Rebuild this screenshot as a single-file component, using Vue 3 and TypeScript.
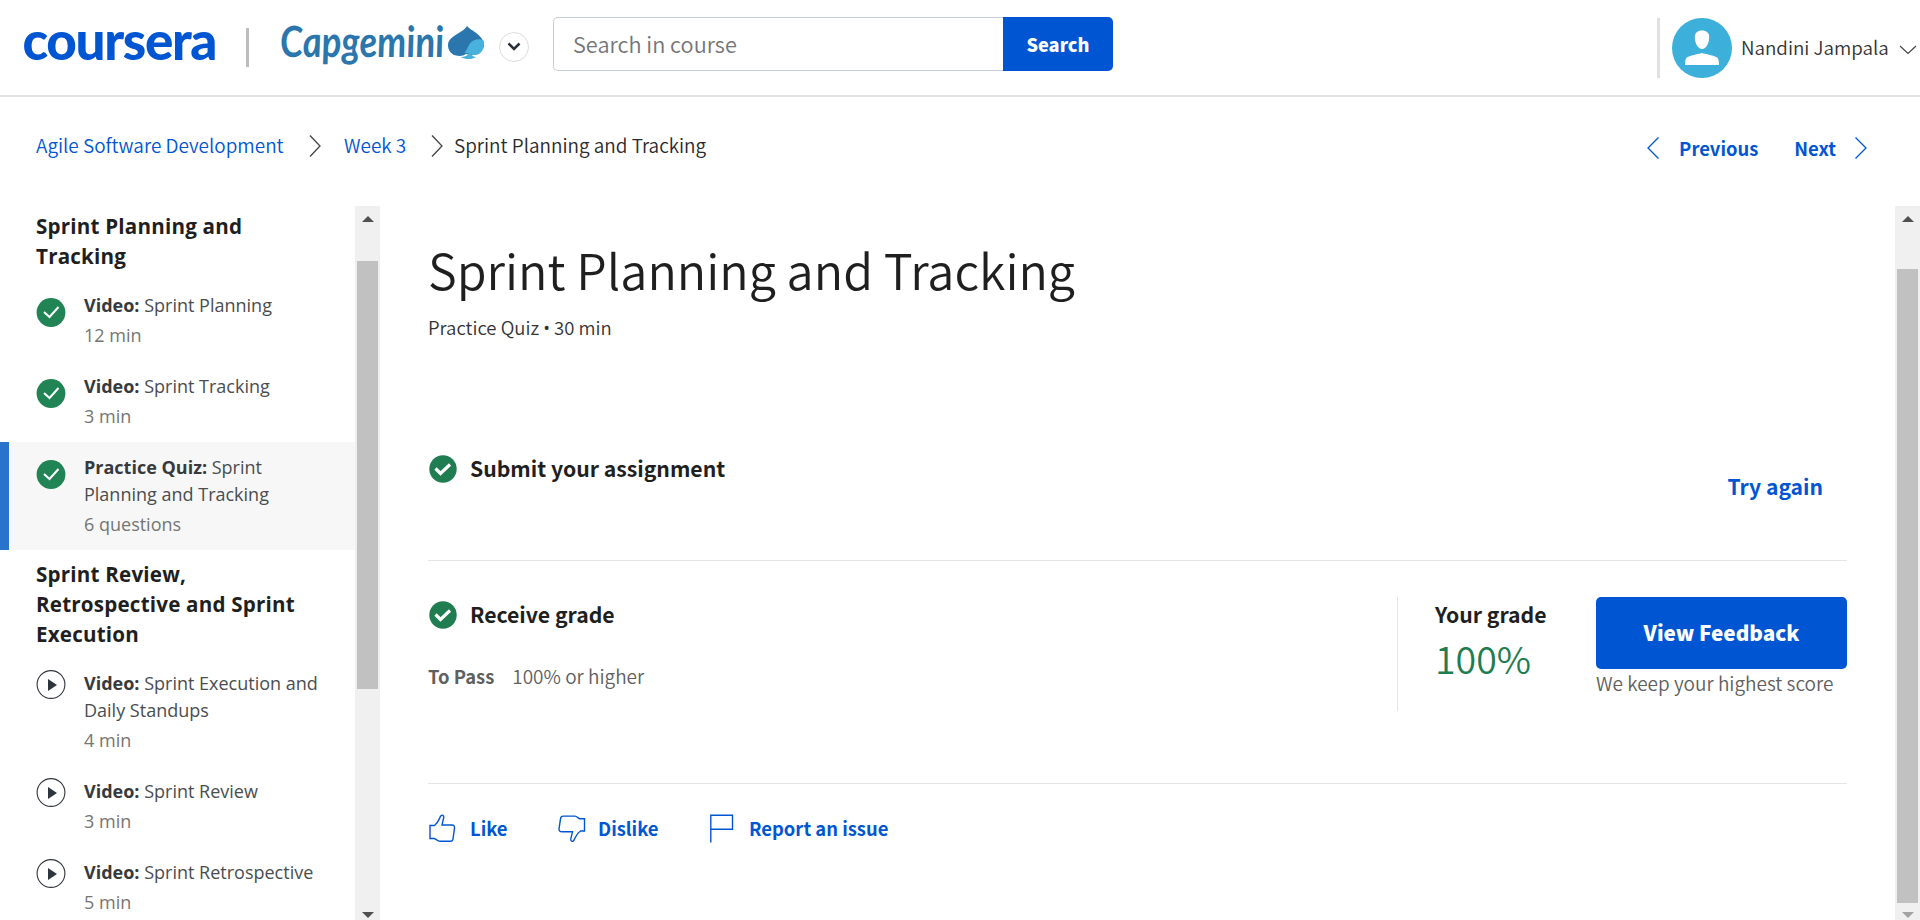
<script setup lang="ts">
interface Lesson {
  kind: string
  name: string
  meta: string
  done: boolean
  active?: boolean
}
interface Section {
  title: string
  lessons: Lesson[]
}

const sections: Section[] = [
  {
    title: 'Sprint Planning and Tracking',
    lessons: [
      { kind: 'Video:', name: 'Sprint Planning', meta: '12 min', done: true },
      { kind: 'Video:', name: 'Sprint Tracking', meta: '3 min', done: true },
      { kind: 'Practice Quiz:', name: 'Sprint Planning and Tracking', meta: '6 questions', done: true, active: true },
    ],
  },
  {
    title: 'Sprint Review, Retrospective and Sprint Execution',
    lessons: [
      { kind: 'Video:', name: 'Sprint Execution and Daily Standups', meta: '4 min', done: false },
      { kind: 'Video:', name: 'Sprint Review', meta: '3 min', done: false },
      { kind: 'Video:', name: 'Sprint Retrospective', meta: '5 min', done: false },
    ],
  },
]
</script>

<template>
  <div class="page">
    <header class="header">
      <svg class="coursera" width="196" height="64" viewBox="0 0 196 64" role="img">
        <text x="0.5" y="50" textLength="195">coursera</text>
      </svg>
      <span class="brand-divider"></span>
      <svg class="capgemini" width="206" height="72" viewBox="0 0 206 72">
        <text transform="translate(0 47) skewX(4)" x="1" y="0" textLength="164" lengthAdjust="spacingAndGlyphs">Capgemini</text>
        <g transform="translate(0 8)">
          <path fill="#2a76ad" d="M187 8c3 3.500 9 6 12.500 10 3 3 4.500 6 4.500 9 0 6-6 9-13 10l-5-1c-3 2.500-9 2.500-13 .5-3-2-5-5-5-9 0-10 14-11.500 19-19.500z" />
          <path fill="#48b1dc" d="M204 23c.7 8-3 13.500-8 14-2 0-3.700-.5-5-1.500.8 2 2.500 3.300 5 3.500-4 2.700-11 2.700-15 0 4-.2 7-1.500 8-4-3 .5-3.500 0-4.500-.8 2.500-1.700 3-4.700 5-8.200 3-4.500 10-6.500 14.500-3z" />
        </g>
      </svg>
      <button class="brand-toggle" aria-label="Switch program">
        <svg width="14" height="10" viewBox="0 0 14 10"><path d="M1.500 1.500L7 7l5.500-5.500" fill="none" stroke="#2b3137" stroke-width="2.500" /></svg>
      </button>
      <div class="search">
        <div class="search-field">Search in course</div>
        <button class="search-button">Search</button>
      </div>
      <div class="user">
        <svg class="avatar" width="60" height="60" viewBox="0 0 60 60">
          <circle cx="30" cy="30" r="30" fill="#3cafdb" />
          <path d="M30 12.500c4.500 0 7.200 2.500 7.200 6.500 0 6-3 12-7.200 12s-7.200-6-7.200-12c0-4 2.700-6.500 7.200-6.500z" fill="#fff" />
          <path d="M13 47c0-3 .3-6 1.500-7.200C17 37.500 27 36 30 35c3 1 13 2.500 15.500 4.800C46.700 41 47 44 47 47z" fill="#fff" />
        </svg>
        <span class="user-name">Nandini Jampala</span>
        <svg class="caret" width="18" height="10" viewBox="0 0 18 10"><path d="M1 1l8 7.500L17 1" fill="none" stroke="#444" stroke-width="1.200" /></svg>
      </div>
    </header>

    <nav class="crumbs">
      <a class="course">Agile Software Development</a>
      <svg class="sep first" width="12" height="22" viewBox="0 0 12 22"><path d="M1 .5L11 11 1 21.500" /></svg>
      <a class="week">Week 3</a>
      <svg class="sep second" width="12" height="22" viewBox="0 0 12 22"><path d="M1 .5L11 11 1 21.500" /></svg>
      <span class="here">Sprint Planning and Tracking</span>
      <div class="pager">
        <svg width="12" height="22" viewBox="0 0 12 22"><path d="M11.500 .5L1 11l10.500 10.500" /></svg>
        <a class="previous">Previous</a>
        <a class="next">Next</a>
        <svg width="12" height="22" viewBox="0 0 12 22"><path d="M.5 .5L11 11 .5 21.500" /></svg>
      </div>
    </nav>

    <div class="body">
      <aside class="sidebar">
        <div class="outline">
          <section v-for="section in sections" :key="section.title">
            <h3>{{ section.title }}</h3>
            <div v-for="lesson in section.lessons" :key="lesson.name" class="lesson" :class="{ active: lesson.active }">
              <svg v-if="lesson.done" class="state" width="30" height="29" viewBox="-.5 0 30 29">
                <circle cx="14.500" cy="14.500" r="14.400" fill="#208454" />
                <path d="M7.500 14l5.500 5L22 9" fill="none" stroke="#fff" stroke-width="2" />
              </svg>
              <svg v-else class="state pending" width="30" height="29" viewBox="-.5 0 30 29">
                <circle cx="14.500" cy="14.500" r="13.900" fill="none" stroke="#2f353c" stroke-width="1.100" />
                <path d="M11.500 9v12l9-6z" fill="#2f353c" />
              </svg>
              <div class="lesson-text">
                <div class="lesson-name"><b>{{ lesson.kind }}</b> {{ lesson.name }}</div>
                <div class="lesson-meta">{{ lesson.meta }}</div>
              </div>
            </div>
          </section>
        </div>
        <div class="scrollbar">
          <i class="arrow up"></i>
          <i class="thumb short"></i>
          <i class="arrow down"></i>
        </div>
      </aside>

      <main class="content">
        <h1>Sprint Planning and Tracking</h1>
        <p class="subtitle">Practice Quiz <span class="dot">•</span> 30 min</p>

        <section class="step submit">
          <div class="step-title">
            <svg width="28" height="28" viewBox="0 0 28 28">
              <circle cx="14" cy="14" r="13.700" fill="#1f7d51" />
              <path d="M6.500 13.500l5 5L21 9.500" fill="none" stroke="#fff" stroke-width="3.200" />
            </svg>
            <h2>Submit your assignment</h2>
          </div>
          <a class="try-again">Try again</a>
        </section>

        <section class="step grade">
          <div class="grade-info">
            <div class="step-title">
              <svg width="28" height="28" viewBox="0 0 28 28">
                <circle cx="14" cy="14" r="13.700" fill="#1f7d51" />
                <path d="M6.500 13.500l5 5L21 9.500" fill="none" stroke="#fff" stroke-width="3.200" />
              </svg>
              <h2>Receive grade</h2>
            </div>
            <p class="to-pass"><b>To Pass</b><span>100% or higher</span></p>
          </div>
          <div class="score">
            <h2>Your grade</h2>
            <strong>100%</strong>
          </div>
          <div class="feedback">
            <button class="view-feedback">View Feedback</button>
            <span>We keep your highest score</span>
          </div>
        </section>

        <footer class="actions">
          <a class="like">
            <svg width="28" height="29" viewBox="0 0 28 29"><path d="M2 11.500h4.500c4.500-3 4.500-7.500 6.500-9.800 1-1.200 3.200-.4 2.700 2L14 11h10c1.800 0 2.800 1.200 2.500 3l-1.500 11c-.2 1.500-1 2.300-2.500 2.300H12c-2.500 0-4.500-2.800-6-2.800H2z" /></svg>
            <span>Like</span>
          </a>
          <a class="dislike">
            <svg width="28" height="29" viewBox="0 0 28 29"><path d="M26.500 4.800V17h-4c-5 3-5 7.500-7 9.800-1 1.200-3.200.4-2.700-2l1.700-7h-10.500c-2 0-3.200-1-3-3l1.500-10c.3-2 1-2.700 2.800-2.700H17c2 0 3.500 2.700 5 2.700z" /></svg>
            <span>Dislike</span>
          </a>
          <a class="report">
            <svg width="26" height="29" viewBox="0 0 26 29"><path d="M1.800 28.500V1.200h21.700v14H1.800" /></svg>
            <span>Report an issue</span>
          </a>
        </footer>
      </main>

      <div class="scrollbar">
        <i class="arrow up"></i>
        <i class="thumb tall"></i>
        <i class="arrow down faded"></i>
      </div>
    </div>
  </div>
</template>

<style>
body {
  margin: 0;
  background: #fff;
}
</style>

<style scoped>
.page {
  box-sizing: border-box;
  width: 1920px;
  height: 920px;
  overflow: hidden;
  display: flex;
  flex-direction: column;
  background: #fff;
  color: #1f1f1f;
  font-family: "Noto Sans CJK SC", "Open Sans", sans-serif;
}
h1, h2, h3, p {
  margin: 0;
}
button {
  border: 0;
  padding: 0;
  font-family: inherit;
  color: #fff;
  background: #0056d2;
}
svg {
  flex: none;
  display: block;
}
h1, .subtitle, .search-field, .user-name, .course, .week, .here, .to-pass span, .feedback span, .score strong {
  font-family: "Noto Sans CJK SC DemiLight", "Noto Sans CJK SC", sans-serif;
  font-weight: 350;
  white-space: nowrap;
}

/* header */
.header {
  box-sizing: border-box;
  height: 97px;
  flex: none;
  display: flex;
  align-items: flex-start;
  border-bottom: 2px solid #e1e1e1;
}
.coursera {
  margin: 10px 0 0 22px;
  overflow: visible;
  font: 900 53px Lato, sans-serif;
  fill: #0056d2;
}
.brand-divider {
  width: 3px;
  height: 39px;
  margin: 28px 0 0 28px;
  background: #bdbdbd;
}
.capgemini {
  margin: 10px 0 0 31px;
  overflow: visible;
  font: italic 700 43px Lato, sans-serif;
  fill: #2a76ad;
}
.brand-toggle {
  box-sizing: border-box;
  width: 30px;
  height: 30px;
  margin: 32px 0 0 13px;
  display: flex;
  align-items: center;
  justify-content: center;
  border: 1px solid #dcdcdc;
  border-radius: 50%;
  background: #fff;
}
.search {
  display: flex;
  margin: 17px 0 0 24px;
}
.search-field {
  box-sizing: border-box;
  width: 450px;
  height: 54px;
  padding-left: 19px;
  border: 1px solid #c7cdd6;
  border-right: 0;
  border-radius: 5px 0 0 5px;
  font-size: 21.7px;
  line-height: 52px;
  color: #757575;
}
.search-button {
  width: 110px;
  height: 54px;
  padding-bottom: 1px;
  border-radius: 0 5px 5px 0;
  font-size: 18.2px;
  font-weight: 900;
}
.user {
  box-sizing: border-box;
  display: flex;
  align-items: center;
  width: 260px;
  height: 60px;
  margin: 18px 3px 0 auto;
  border-left: 3px solid #e0e0e0;
}
.avatar {
  margin: 0 9px 0 12px;
}
.user-name {
  padding-bottom: 3px;
  font-size: 18.8px;
  color: #333;
}
.caret {
  margin: 3px 0 0 auto;
}

/* breadcrumbs */
.crumbs {
  height: 109px;
  flex: none;
  display: flex;
  align-items: flex-start;
  padding-left: 36px;
  font-size: 18.95px;
  line-height: 28px;
}
.crumbs > a, .here {
  margin-top: 34px;
}
.crumbs a {
  color: #0056d2;
}
.course {
  width: 248px;
}
.week {
  width: 62px;
}
.here {
  color: #2b2b2b;
}
.sep {
  margin-top: 38px;
  fill: none;
  stroke: #444;
  stroke-width: 1.3;
}
.sep.first {
  margin-left: 25px;
  margin-right: 23px;
}
.sep.second {
  margin-left: 25px;
  margin-right: 11px;
}
.pager {
  display: flex;
  align-items: center;
  margin: 37px 53px 0 auto;
  height: 28px;
  font-size: 18.4px;
  font-weight: 700;
}
.pager svg {
  fill: none;
  stroke: #0056d2;
  stroke-width: 1.3;
}
.previous {
  margin: 0 36px 0 20px;
}
.next {
  margin-right: 19px;
}

/* body */
.body {
  flex: 1;
  min-height: 0;
  display: flex;
}
.sidebar {
  width: 380px;
  flex: none;
  display: flex;
  font-family: "Open Sans", sans-serif;
}
.outline {
  width: 355px;
  height: 714px;
  overflow: hidden;
  display: flex;
  flex-direction: column;
}
.outline section:first-child {
  margin-top: -4px;
}
.outline section {
  flex: none;
}
h3 {
  padding: 9px 50px 9px 36px;
  font-size: 20.6px;
  font-weight: 700;
  line-height: 30px;
  letter-spacing: 0.2px;
}
.lesson {
  box-sizing: border-box;
  display: flex;
  padding: 12px 20px 12px 27px;
  border-left: 9px solid transparent;
}
.lesson.active {
  border-left-color: #2a73cc;
  background: #f7f7f7;
}
.state {
  margin: 6px 18px 0 0;
}
.state.pending {
  margin-top: 0;
}
.lesson-text {
  width: 240px;
}
.lesson-name {
  font-size: 18px;
  line-height: 27px;
  color: #4a4d50;
}
.lesson-name b {
  font-weight: 700;
  color: #373a3c;
}
.lesson-meta {
  font-size: 18px;
  line-height: 30px;
  padding-top: 1px;
  margin-bottom: -1px;
  color: #757575;
}
.scrollbar {
  width: 25px;
  flex: none;
  display: flex;
  flex-direction: column;
  align-items: center;
  background: #f0f0f0;
}
.thumb {
  width: 21px;
  background: #c1c1c1;
}
.thumb.short {
  height: 428px;
  margin-top: 39px;
}
.thumb.tall {
  height: 634px;
  margin-top: 47px;
}
.arrow {
  border-left: 6px solid transparent;
  border-right: 6px solid transparent;
}
.arrow.up {
  margin-top: 10px;
  border-bottom: 6px solid #505050;
}
.arrow.down {
  margin-top: auto;
  margin-bottom: 2px;
  border-top: 6px solid #505050;
}
.arrow.faded {
  border-top-color: #a3a3a3;
}

/* main column */
.content {
  flex: 1;
  padding: 33px 48px 0 48px;
}
h1 {
  font-size: 48.6px;
  line-height: 60px;
}
.subtitle {
  margin-top: 14px;
  font-size: 18.5px;
  line-height: 28px;
  color: #333;
}
.dot {
  font: 18px/20px "Open Sans", sans-serif;
}
.submit {
  box-sizing: border-box;
  height: 220px;
  padding-top: 114px;
  display: flex;
  align-items: flex-start;
  justify-content: space-between;
  border-bottom: 1px solid #e5e5e5;
}
.step-title {
  display: flex;
  align-items: center;
  gap: 13px;
  height: 28px;
  padding-left: 1px;
}
h2 {
  font-size: 21.2px;
  font-weight: 700;
  line-height: 28px;
}
.step-title h2 {
  padding-bottom: 2px;
}
.try-again {
  margin: 17px 24px 0 0;
  font-size: 21.1px;
  font-weight: 700;
  line-height: 28px;
  color: #0056d2;
}
.grade {
  box-sizing: border-box;
  height: 223px;
  padding-top: 36px;
  display: flex;
  align-items: flex-start;
  border-bottom: 1px solid #e5e5e5;
}
.grade-info {
  flex: 1;
  padding-top: 4px;
}
.to-pass {
  display: flex;
  gap: 18px;
  margin-top: 33px;
  font-size: 19px;
  line-height: 28px;
  color: #5f5f5f;
}
.to-pass b {
  font-size: 18.4px;
}
.score {
  box-sizing: border-box;
  width: 199px;
  height: 114px;
  padding: 3px 0 0 37px;
  border-left: 1px solid #e5e5e5;
}
.score strong {
  display: block;
  margin-top: 5px;
  font-size: 37.5px;
  line-height: 50px;
  color: #1f7d51;
}
.feedback {
  width: 251px;
}
.view-feedback {
  display: block;
  width: 251px;
  height: 72px;
  padding-bottom: 2px;
  border-radius: 5px;
  font-size: 20.7px;
  font-weight: 900;
}
.feedback span {
  display: block;
  font-size: 19px;
  line-height: 28px;
  color: #5f5f5f;
}
.actions {
  display: flex;
  padding-top: 30px;
  font-size: 18.4px;
  font-weight: 700;
  color: #0056d2;
}
.actions a {
  display: flex;
  align-items: center;
  gap: 14px;
  height: 29px;
}
.actions span {
  padding-bottom: 2px;
}
.actions svg {
  fill: none;
  stroke: #0056d2;
  stroke-width: 1.4;
}
.actions .like {
  width: 130px;
}
.actions .dislike {
  width: 151px;
  gap: 12px;
}
</style>
